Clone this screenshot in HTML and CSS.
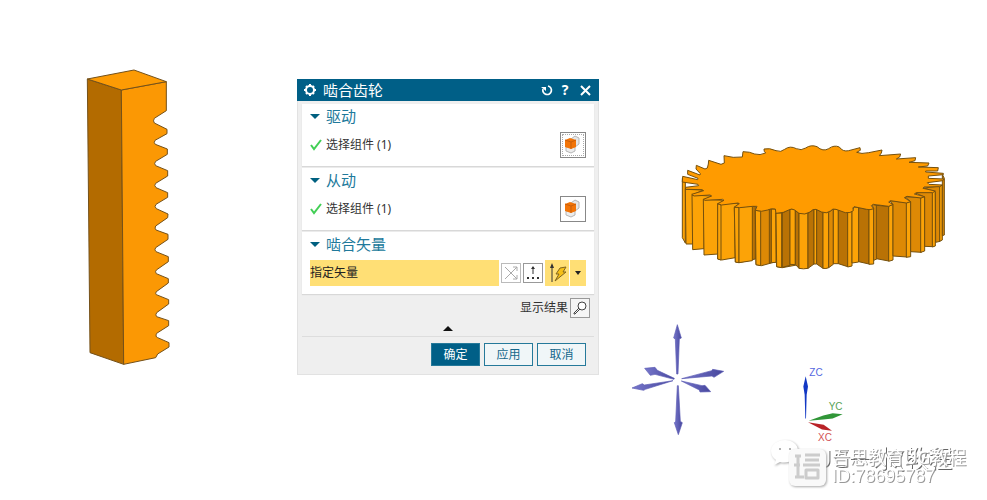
FILE: index.html
```
<!DOCTYPE html>
<html lang="zh-CN">
<head>
    <meta charset="UTF-8">
    <meta name="viewport" content="width=device-width, initial-scale=1.0">
    <title>啮合齿轮</title>
    <link rel="stylesheet" href="styles.css">
</head>
<body>
    <main class="viewport">
        <!-- Rack -->
        <svg class="model rack" viewBox="0 0 360 960" aria-hidden="true">
            <path class="rack-side" d="M52 57L154 90L161 913L60 878Z"/>
            <path class="rack-front" d="M154 90L289 65V152L253 175Q248 183 253 189L291 208V221L255 241Q250 249 256 253L292 267V283L257 304Q251 311 257 317L293 332V348L257 370Q251 376 258 383L293 398V412L258 433Q252 440 259 446L294 462L293 473L257 498Q253 505 258 510L294 523V538L257 563Q252 570 258 575L295 590V605L259 630Q254 635 259 641L295 656V669L259 695Q255 700 259 704L296 719V732L260 758Q255 765 260 770L296 782V797L260 820Q255 830 263 833L297 848V861L263 882L257 893L161 913Z"/>
            <path class="rack-top" d="M52 57L192 30L289 65L154 90Z"/>
        </svg>

        <!-- Gear -->
        <svg class="model gear" viewBox="0 0 855 435" aria-hidden="true">
            <g class="gear-side">
                <path class="light" d="M37 130L46 140V324L37 308Z"/>
                <path class="light" d="M46 163L100 165L68 180V327L48 327Z"/>
                <path class="light" d="M66 180L125 183L102 195V341L68 344Z"/>
                <path class="light" d="M100 193L162 196L145 208V357L102 360Z"/>
                <path class="light" d="M144 206L207 205L196 218V368L155 375L143 372Z"/>
                <path class="light" d="M143 206L153 210V375L143 372Z"/>
                <path class="dark" d="M193 217L256 214V372L207 383L196 381Z"/>
                <path class="light" d="M193 217H207V383L196 381Z"/>
                <path class="light" d="M207 217L247 212V377L207 383Z"/>
                <path class="mid" d="M256 226L318 222V380L275 392L258 389Z"/>
                <path class="light" d="M256 226L272 228V392L258 389Z"/>
                <path class="dark" d="M298 222L304 221V382L298 385Z"/>
                <path class="light" d="M304 222H318V382L304 383Z"/>
                <path class="mid" d="M318 234L380 224V390L337 398L320 395Z"/>
                <path class="light" d="M318 234H335V398L320 395Z"/>
                <path class="dark" d="M337 234L360 222V391L337 397Z"/>
                <path class="light" d="M360 222H376V389L360 388Z"/>
                <path class="dark" d="M376 225L387 235V400L376 388Z"/>
                <path class="light" d="M387 235H414V400Q400 403 387 400Z"/>
                <path class="dark" d="M414 235L432 222V387L414 400Z"/>
                <path class="light" d="M432 222H440V387H432Z"/>
                <path class="dark" d="M440 223L459 233V400L440 387Z"/>
                <path class="light" d="M459 233L476 232V398Q468 402 459 400Z"/>
                <path class="mid" d="M476 232L490 222V388L476 398Z"/>
                <path class="light" d="M490 222H505V386H490Z"/>
                <path class="dark" d="M505 224L533 233V395L505 386Z"/>
                <path class="light" d="M533 233L546 229V393L533 396Z"/>
                <path class="light" d="M546 230L552 216L566 218V381L546 384Z"/>
                <path class="dark" d="M566 218L597 224V387L566 380Z"/>
                <path class="light" d="M597 224L611 220V387L597 388Z"/>
                <path class="mid" d="M611 220L605 208L622 212V371L611 376Z"/>
                <path class="dark" d="M619 211L656 214V378L619 371Z"/>
                <path class="light" d="M656 214L669 208V375L656 379Z"/>
                <path class="mid" d="M669 208L659 197L711 203V366L669 363Z"/>
                <path class="light" d="M709 204L722 199V365L709 367Z"/>
                <path class="mid" d="M722 200L704 185L754 188V352L722 350Z"/>
                <path class="light" d="M752 189L764 184V348L752 352Z"/>
                <path class="mid" d="M764 186L734 173L788 171V335L764 334Z"/>
                <path class="light" d="M787 172L796 167V333L787 336Z"/>
                <path class="mid" d="M796 170L762 159L810 153V319L797 322Z"/>
                <path class="light" d="M809 154L817 150V315L809 319Z"/>
                <path class="mid" d="M817 118L823 130V300L817 302Z"/>
            </g>
            <path class="gear-top" d="M46 163L47 157L86 152L84 148L37 141L38 124L83 134L84 130L53 118V106L90 120L91 116L78 102L79 91L105 102L112 99L115 87L116 76L153 88L163 84L162 62Q190 70 217 66L219 50Q240 50 254 57Q270 62 287 54Q281 50 282 42Q298 38 318 47Q333 53 344 43Q360 31 379 41Q394 48 407 39Q423 28 441 35Q459 51 476 41Q492 29 508 36Q518 51 536 47L570 38L571 46L560 52Q574 58 596 53L636 45L634 54L628 62L692 57L689 66L679 72L737 68L735 77L717 82L777 84L773 93L745 96L805 98L803 108L767 108V111L820 115V119L775 123V130L822 132L819 137L772 143L777 148L817 150L809 155L762 156L759 160L796 168L788 173L739 173L733 177L764 185L753 189L711 184L703 188L722 200L709 204L661 197L656 201L669 208L656 214L610 208L604 212L611 221Q600 226 590 223L552 215Q546 217 550 227Q541 235 526 233L498 223Q488 219 481 228Q471 237 455 231L438 223Q428 221 420 231Q405 241 387 235L374 225Q365 219 356 225Q343 234 318 235L316 222Q304 219 293 225Q275 232 256 226L261 214H248L209 218L193 216L208 206L204 204L155 210L143 206L162 196L158 193L105 196L100 193L125 183L120 180L72 183L65 178L101 167L96 164Z"/>
        </svg>

        <!-- Vector handles -->
        <svg class="model handles" viewBox="0 0 345 390" aria-hidden="true">
            <defs>
                <linearGradient id="shaft">
                    <stop offset="0" stop-color="#7777cc"/>
                    <stop offset="1" stop-color="#46469c"/>
                </linearGradient>
            </defs>
            <g fill="url(#shaft)" stroke="#5c5cb4" stroke-width="2">
                <path d="M172 29L184 69L178 72L174 177H170L166 72L161 69Z"/>
                <path d="M172 212H175L181 319L187 323L175 359L163 323L167 319Z"/>
                <path d="M74 160L105 157L112 166L163 190L162 193L105 178L91 181Z"/>
                <path d="M159 197L76 223L71 226L36 219L67 206L73 210Z"/>
                <path d="M185 191L275 167L278 163L311 169L282 187L276 183Z"/>
                <path d="M184 198L246 212L255 211L272 230L240 231L238 225Z"/>
            </g>
        </svg>

        <!-- Work coordinate system -->
        <svg class="model wcs" viewBox="0 0 300 260" aria-hidden="true">
            <path fill="#1238c4" d="M137 48L144 79L140 104L138 175H136L134 104L130 79Z"/>
            <path fill="#319638" d="M146 182L190 166L218 159L248 162L218 175L190 178Z"/>
            <path fill="#b92227" d="M144 186L191 194L216 212L186 208Z"/>
            <text x="148" y="48" fill="#5567df">ZC</text>
            <text x="206" y="150" fill="#56a257">YC</text>
            <text x="174" y="244" fill="#d35355">XC</text>
        </svg>

        <form class="dialog" aria-labelledby="dialog-title">
            <header class="titlebar">
                <svg class="title-icon" viewBox="0 0 14 14" aria-hidden="true">
                    <circle cx="7" cy="7" r="4" fill="none" stroke="#fff" stroke-width="2"/>
                    <path d="M7 1v2M7 11v2M1 7h2M11 7h2M3 3l1 1M10 10l1 1M3 11l1-1M10 4l1-1" stroke="#fff" stroke-width="2"/>
                </svg>
                <h1 id="dialog-title">啮合齿轮</h1>
                <button type="button" aria-label="重置">
                    <svg viewBox="0 0 12 12"><path d="M2 5a4.300 4.300 0 1 0 5-3" fill="none" stroke="#fff" stroke-width="1.700"/><path d="M0 3h5v4z" fill="#fff"/></svg>
                </button>
                <button type="button" class="help">?</button>
                <button type="button" aria-label="关闭">
                    <svg viewBox="0 0 12 12"><path d="M1 2l9 9M10 2l-9 9" stroke="#fff" stroke-width="2"/></svg>
                </button>
            </header>

            <div class="panel">
                <section class="group">
                    <button type="button" class="group-head"><span class="arrow"></span>驱动</button>
                    <div class="row">
                        <svg class="check" viewBox="0 0 12 12" aria-hidden="true"><path d="M1 6l3 4L11 1"/></svg>
                        <span>选择组件 (1)</span>
                        <button type="button" class="pick focused" aria-label="选择驱动组件">
                            <svg viewBox="0 0 20 20">
                                <path d="M8 4l4-3 4 2v6l-4 3-4-3z" fill="#e6e6e6" stroke="#b5b5b5"/>
                                <path d="M3 12h9v4l-4 2-5-2z" fill="#ececec" stroke="#b5b5b5"/>
                                <path d="M2 5l5-2 6 2v7l-5 2-6-2z" fill="#f27407"/>
                                <path d="M2 5l6 2 5-2M8 7v7" fill="none" stroke="#c95e0a"/>
                            </svg>
                        </button>
                    </div>
                </section>

                <section class="group">
                    <button type="button" class="group-head"><span class="arrow"></span>从动</button>
                    <div class="row">
                        <svg class="check" viewBox="0 0 12 12" aria-hidden="true"><path d="M1 6l3 4L11 1"/></svg>
                        <span>选择组件 (1)</span>
                        <button type="button" class="pick" aria-label="选择从动组件">
                            <svg viewBox="0 0 20 20">
                                <path d="M8 4l4-3 4 2v6l-4 3-4-3z" fill="#e6e6e6" stroke="#b5b5b5"/>
                                <path d="M3 12h9v4l-4 2-5-2z" fill="#ececec" stroke="#b5b5b5"/>
                                <path d="M2 5l5-2 6 2v7l-5 2-6-2z" fill="#f27407"/>
                                <path d="M2 5l6 2 5-2M8 7v7" fill="none" stroke="#c95e0a"/>
                            </svg>
                        </button>
                    </div>
                </section>

                <section class="group">
                    <button type="button" class="group-head"><span class="arrow"></span>啮合矢量</button>
                    <div class="vector-row">
                        <span class="vector-label">指定矢量</span>
                        <button type="button" class="tool" aria-label="反向" disabled>
                            <svg viewBox="0 0 18 18"><path d="M3 3l12 12M15 3L3 15M11 3h4v4M11 15h4v-4" fill="none" stroke="#aaa"/></svg>
                        </button>
                        <button type="button" class="tool" aria-label="矢量对话框">
                            <svg viewBox="0 0 18 18"><path d="M9 3v7" stroke="#333"/><path d="M7 5l2-3 2 3zM3 13h2v2H3zM8 13h2v2H8zM13 13h2v2h-2z" fill="#333"/></svg>
                        </button>
                        <button type="button" class="infer" aria-label="自动判断的矢量">
                            <svg viewBox="0 0 24 26"><path d="M7 5v17" stroke="#333"/><path d="M5 8l2-5 2 5z" fill="#333"/><path d="M15 8l6-1-3 5h3L10 21l4-7h-3z" fill="#f5bf16" stroke="#80651f"/></svg>
                        </button>
                        <button type="button" class="infer infer-menu" aria-label="矢量类型"><span class="arrow"></span></button>
                    </div>
                </section>

                <div class="result">
                    <label for="show-result">显示结果</label>
                    <button type="button" class="tool" id="show-result">
                        <svg viewBox="0 0 18 18"><circle cx="11" cy="7" r="4" fill="#fff" stroke="#444"/><path d="M8 9l-5 5v1h1l5-5" fill="none" stroke="#444"/></svg>
                    </button>
                </div>
                <button type="button" class="collapse" aria-label="收起"><span class="arrow up"></span></button>
            </div>

            <footer class="actions">
                <button type="button" class="action primary">确定</button>
                <button type="button" class="action">应用</button>
                <button type="button" class="action">取消</button>
            </footer>
        </form>

        <!-- Watermarks -->
        <svg class="model watermark" viewBox="0 0 217 60" aria-hidden="true">
            <g class="wm-logo">
                <path d="M15 5c-8 0-14 5-14 11 0 4 2 7 5 9l-2 5 6-3c8 2 18-2 18-11 0-7-6-11-13-11z"/>
                <circle class="eye" cx="10" cy="14" r="1"/>
                <circle class="eye" cx="20" cy="14" r="1"/>
            </g>
            <text class="wm-back" x="44" y="32">UG一水(教程</text>
            <rect class="wm-badge" x="19" y="14" width="37" height="37" rx="6"/>
            <path class="wm-mark" d="M25 21h6M28 21v21M25 42h9M35 20h15M35 25h14M33 30h17M36 35h12v8H36zM24 30h6"/>
            <text class="wm-front" x="62" y="29">吾思教育UG教程</text>
            <text class="wm-front wm-id" x="62" y="47">ID:78695787</text>
        </svg>
    </main>
</body>
</html>
```
FILE: styles.css
```
* {
    box-sizing: border-box;
}

body {
    margin: 0;
    background: #fff;
    color: #333;
    font-family: "Noto Sans", "Noto Sans CJK SC", sans-serif;
    font-size: 12px;
    line-height: 16px;
}

button {
    margin: 0;
    padding: 0;
    border: 0;
    background: none;
    color: inherit;
    font: inherit;
    cursor: pointer;
}

svg {
    display: block;
}

/* Graphics window */
.viewport {
    position: relative;
    min-height: 100vh;
    overflow: hidden;
}

.model {
    position: absolute;
    stroke-linejoin: round;
}

.rack {
    left: 70px;
    top: 60px;
    width: 120px;
    height: 320px;
    stroke: #74511a;
    stroke-width: 3;
}

.rack-side {
    fill: #b36b00;
}

.rack-front {
    fill: #fb9804;
}

.rack-top {
    fill: #fd9b04;
}

.gear {
    left: 670px;
    top: 135px;
    width: 285px;
    height: 145px;
    stroke: #75500d;
    stroke-width: 3;
}

.gear-top {
    fill: #ff9b00;
}

.gear-side .light {
    fill: #fca307;
}

.gear-side .mid {
    fill: #dd8905;
}

.gear-side .dark {
    fill: #b97205;
}

.handles {
    left: 620px;
    top: 315px;
    width: 115px;
    height: 130px;
}

.wcs {
    left: 760px;
    top: 360px;
    width: 100px;
    height: 87px;
    font-family: "Liberation Sans", sans-serif;
    font-size: 30px;
}

/* Dialog */
.dialog {
    position: absolute;
    left: 297px;
    top: 79px;
    width: 302px;
    border: 1px solid #e2e2e2;
    border-top: 0;
    background: #efefef;
}

.titlebar {
    display: flex;
    align-items: center;
    gap: 6px;
    height: 22px;
    margin: 0 -1px;
    padding: 0 7px 0 6px;
    background: #005f87;
    color: #fff;
}

.titlebar h1 {
    flex: 1;
    margin: 0;
    font-size: 15px;
    font-weight: 400;
    line-height: 22px;
}

.title-icon {
    width: 14px;
    height: 14px;
}

.titlebar button {
    width: 12px;
    height: 12px;
    line-height: 12px;
}

.titlebar .help {
    margin-right: 3px;
    font-size: 14px;
    font-weight: 700;
}

.panel {
    display: flex;
    flex-direction: column;
    gap: 2px;
    margin: 0 4px;
    padding-top: 3px;
    border-bottom: 1px solid #ddd;
}

.group {
    padding: 0 8px 4px;
    background: #fff;
    box-shadow: 0 1px 1px #d8d8d8;
}

.group-head {
    display: flex;
    align-items: center;
    gap: 6px;
    width: 100%;
    height: 24px;
    color: #20799b;
    font-size: 15px;
}

.arrow {
    width: 0;
    height: 0;
    border: 4px solid transparent;
    border-top: 5px solid #006080;
    border-bottom: 0;
}

.group-head .arrow {
    border-width: 5px 5px 0;
}

.row {
    display: flex;
    align-items: center;
    gap: 4px;
    height: 34px;
}

.check {
    width: 12px;
    height: 12px;
    fill: none;
    stroke: #42cf55;
    stroke-width: 2;
}

.pick {
    width: 26px;
    height: 26px;
    margin-left: auto;
    padding: 2px;
    border: 1px solid #888;
    background: #fff;
}

.pick svg {
    width: 20px;
    height: 20px;
}

.pick.focused svg {
    outline: 1px dotted #aaa;
}

.vector-row {
    display: flex;
    align-items: center;
    gap: 2px;
    height: 34px;
}

.vector-label {
    flex: 1;
    background: #ffdf75;
    color: #222;
    line-height: 26px;
}

.tool {
    width: 20px;
    height: 20px;
    border: 1px solid #999;
    background: #fff;
}

.tool:disabled {
    border-color: #bbb;
}

.infer {
    width: 24px;
    height: 26px;
    background: #ffdf75;
}

.infer svg {
    width: 24px;
    height: 26px;
}

.infer-menu {
    display: flex;
    align-items: center;
    justify-content: center;
    width: 16px;
    margin-left: -1px;
}

.infer-menu .arrow {
    border-width: 4px 3px 0;
    border-top-color: #222;
}

.result {
    display: flex;
    align-items: center;
    justify-content: flex-end;
    gap: 2px;
    padding: 2px 4px 0 0;
}

.result .tool {
    background: #f5f5f5;
}

.collapse {
    display: flex;
    align-items: center;
    justify-content: center;
    height: 16px;
}

.up {
    border: 5px solid transparent;
    border-top: 0;
    border-bottom-color: #111;
}

.actions {
    display: flex;
    justify-content: flex-end;
    gap: 4px;
    padding: 6px 12px 8px;
}

.action {
    width: 49px;
    height: 23px;
    border: 1px solid #25799a;
    background: #f0f6f8;
    color: #16688b;
}

.action.primary {
    background: #005f87;
    color: #fff;
}

/* Watermark */
.watermark {
    left: 770px;
    top: 435px;
    width: 217px;
    height: 60px;
    fill: #fff;
}

.wm-logo,
.wm-badge {
    filter: drop-shadow(1px 1px 1px #aaa);
}

.wm-logo .eye {
    fill: #999;
}

.wm-back {
    font-size: 24px;
    filter: drop-shadow(1px 1px 0 #666);
}

.wm-badge {
    fill: #f9f9f9;
}

.wm-mark {
    fill: none;
    stroke: #ccc;
    stroke-width: 3;
}

.wm-front {
    font-size: 18px;
    filter: drop-shadow(1px 1px 0 #999);
}

.wm-id {
    font-family: "Liberation Sans", sans-serif;
}
```
